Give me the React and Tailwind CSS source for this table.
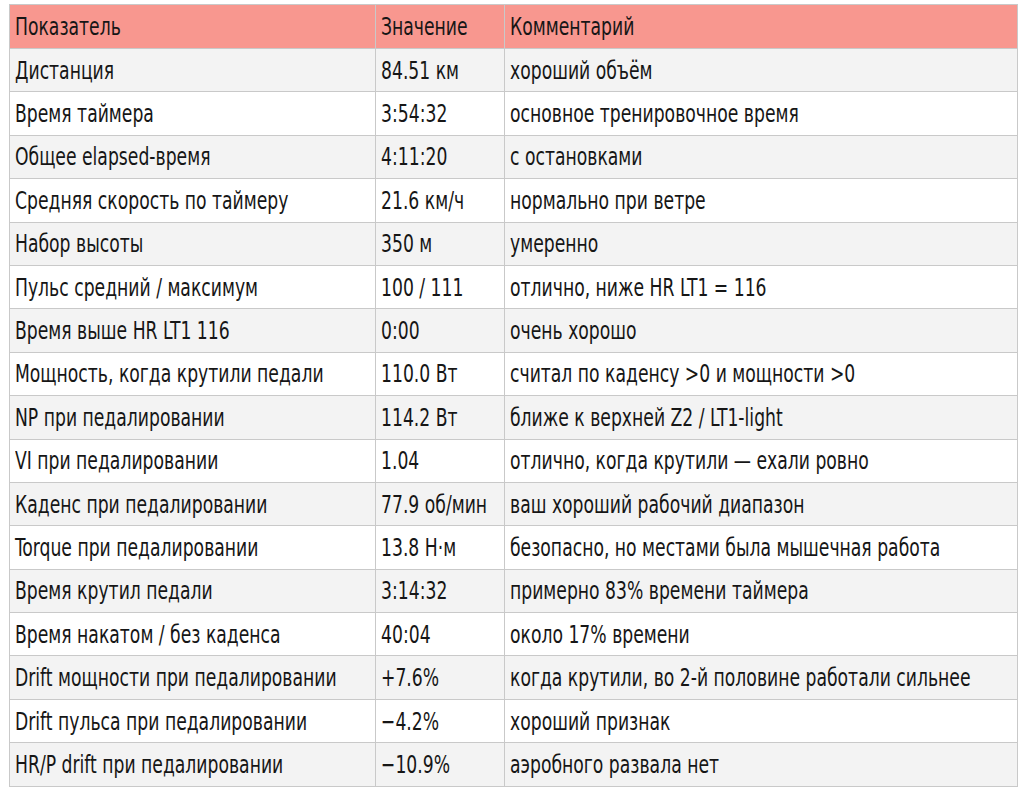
const rows = [
  ['Дистанция', '84.51 км', 'хороший объём'],
  ['Время таймера', '3:54:32', 'основное тренировочное время'],
  ['Общее elapsed-время', '4:11:20', 'с остановками'],
  ['Средняя скорость по таймеру', '21.6 км/ч', 'нормально при ветре'],
  ['Набор высоты', '350 м', 'умеренно'],
  ['Пульс средний / максимум', '100 / 111', 'отлично, ниже HR LT1 = 116'],
  ['Время выше HR LT1 116', '0:00', 'очень хорошо'],
  ['Мощность, когда крутили педали', '110.0 Вт', 'считал по каденсу >0 и мощности >0'],
  ['NP при педалировании', '114.2 Вт', 'ближе к верхней Z2 / LT1-light'],
  ['VI при педалировании', '1.04', 'отлично, когда крутили — ехали ровно'],
  ['Каденс при педалировании', '77.9 об/мин', 'ваш хороший рабочий диапазон'],
  ['Torque при педалировании', '13.8 Н·м', 'безопасно, но местами была мышечная работа'],
  ['Время крутил педали', '3:14:32', 'примерно 83% времени таймера'],
  ['Время накатом / без каденса', '40:04', 'около 17% времени'],
  ['Drift мощности при педалировании', '+7.6%', 'когда крутили, во 2-й половине работали сильнее'],
  ['Drift пульса при педалировании', '−4.2%', 'хороший признак'],
  ['HR/P drift при педалировании', '−10.9%', 'аэробного развала нет'],
];

// narrow face: condensed font squeezed a bit more
function Txt({ children }) {
  return <span className="inline-block origin-left scale-x-[0.765] whitespace-nowrap">{children}</span>;
}

const cell = 'border border-[#c9c9c9] px-[5px] text-left font-normal';

export default function App() {
  return (
    <div className="w-[1024px] h-[792px] overflow-hidden bg-white pt-[4px] pl-[9px] font-['DejaVu_Sans_Condensed','DejaVu_Sans',sans-serif] text-[#161616] text-[25px] leading-none">
      <table className="border-collapse table-fixed w-[1008px]">
        <colgroup>
          <col className="w-[366px]" />
          <col className="w-[129px]" />
          <col className="w-[513px]" />
        </colgroup>
        <thead>
          <tr className="bg-[#f8978f] h-[44px]">
            <th className={cell}><Txt>Показатель</Txt></th>
            <th className={cell}><Txt>Значение</Txt></th>
            <th className={cell}><Txt>Комментарий</Txt></th>
          </tr>
        </thead>
        <tbody>
          {rows.map((r, i) => (
            <tr key={i} className={i % 2 === 0 ? 'bg-[#f3f3f3] h-[43.4px]' : 'bg-white h-[43.4px]'}>
              <td className={cell}><Txt>{r[0]}</Txt></td>
              <td className={cell}><Txt>{r[1]}</Txt></td>
              <td className={cell}><Txt>{r[2]}</Txt></td>
            </tr>
          ))}
        </tbody>
      </table>
    </div>
  );
}
